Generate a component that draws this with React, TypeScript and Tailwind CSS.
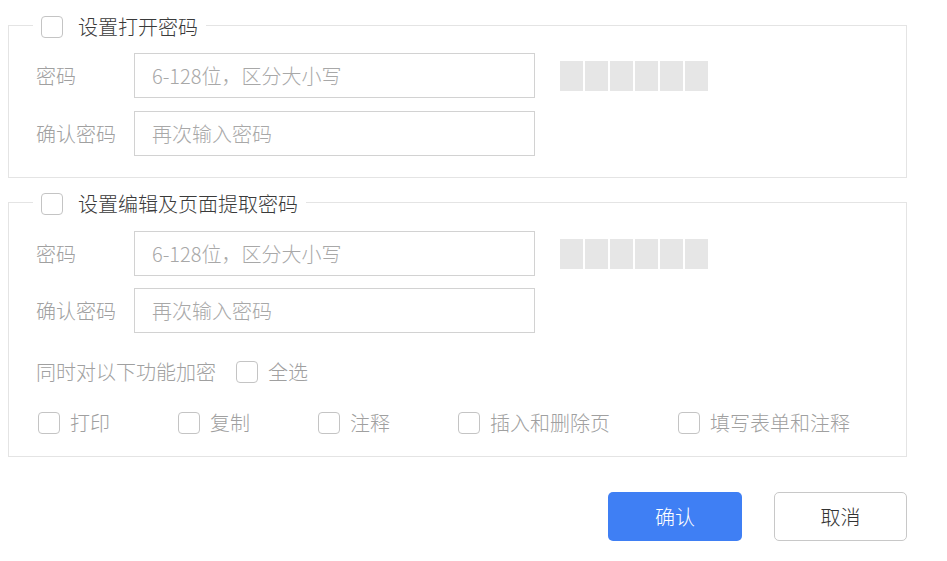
import React from "react";

const font = { fontFamily: '"Noto Sans CJK SC", "Noto Sans", sans-serif' };

function Box({ className = "" }: { className?: string }) {
  return (
    <input
      type="checkbox"
      className={"appearance-none block shrink-0 w-[22px] h-[22px] border border-[#c4c4c4] rounded-[4px] bg-white m-0 " + className}
    />
  );
}

function Legend({ text }: { text: string }) {
  return (
    <legend className="ml-[24px] px-[8px] h-[24px] pt-[4px] box-border">
      <div className="flex items-center gap-[15px] h-[20px]">
        <Box />
        <span className="text-[20px] leading-none text-[#3a3a3a]">{text}</span>
      </div>
    </legend>
  );
}

function Field({ label, placeholder, strength }: { label: string; placeholder: string; strength?: boolean }) {
  return (
    <div className="flex items-center h-[45px]">
      <div className="w-[98px] text-[20px] text-[#a0a0a0] leading-none">{label}</div>
      <input
        type="text"
        placeholder={placeholder}
        className="w-[401px] h-[45px] box-border border border-[#d2d2d2] bg-white pl-[17px] text-[20px] font-light text-[#333] placeholder:text-[#a8a8a8] outline-none"
        style={font}
      />
      {strength && (
        <div className="ml-[25px] flex gap-[2px]">
          <div className="w-[23px] h-[30px] bg-[#e6e6e6]" />
          <div className="w-[23px] h-[30px] bg-[#e6e6e6]" />
          <div className="w-[23px] h-[30px] bg-[#e6e6e6]" />
          <div className="w-[23px] h-[30px] bg-[#e6e6e6]" />
          <div className="w-[23px] h-[30px] bg-[#e6e6e6]" />
          <div className="w-[23px] h-[30px] bg-[#e6e6e6]" />
        </div>
      )}
    </div>
  );
}

function Opt({ text }: { text: string }) {
  return (
    <label className="flex items-center gap-[10px]">
      <Box />
      <span className="text-[20px] leading-none text-[#a0a0a0]">{text}</span>
    </label>
  );
}

export default function App() {
  return (
    <div className="w-[947px] h-[561px] bg-white overflow-hidden pt-[13px] font-light" style={font}>
      <div className="ml-[8px] w-[899px]">
        <fieldset className="border border-[#e4e4e4] p-0 m-0">
          <Legend text="设置打开密码" />
          <div className="pl-[27px] pt-[16px] pb-[21px] flex flex-col gap-[13px]">
            <Field label="密码" placeholder="6-128位，区分大小写" strength />
            <Field label="确认密码" placeholder="再次输入密码" />
          </div>
        </fieldset>

        <fieldset className="border border-[#e4e4e4] p-0 m-0 mt-[12px]">
          <Legend text="设置编辑及页面提取密码" />
          <div className="pl-[27px] pt-[17px] pb-[22px] flex flex-col">
            <div className="flex flex-col gap-[12px]">
              <Field label="密码" placeholder="6-128位，区分大小写" strength />
              <Field label="确认密码" placeholder="再次输入密码" />
            </div>
            <div className="mt-[28px] flex items-center h-[22px]">
              <span className="text-[20px] leading-none text-[#a0a0a0] mr-[20px]">同时对以下功能加密</span>
              <Opt text="全选" />
            </div>
            <div className="mt-[29px] flex items-center gap-[68px] h-[22px] pl-[2px]">
              <Opt text="打印" />
              <Opt text="复制" />
              <Opt text="注释" />
              <Opt text="插入和删除页" />
              <Opt text="填写表单和注释" />
            </div>
          </div>
        </fieldset>

        <div className="mt-[35px] flex justify-end gap-[32px]">
          <button className="w-[134px] h-[49px] rounded-[5px] bg-[#3f7ff4] text-white text-[20px] font-light" style={font}>
            确认
          </button>
          <button className="w-[133px] h-[49px] rounded-[5px] border border-[#c8c8c8] bg-white text-[#333333] text-[20px] font-light" style={font}>
            取消
          </button>
        </div>
      </div>
    </div>
  );
}
